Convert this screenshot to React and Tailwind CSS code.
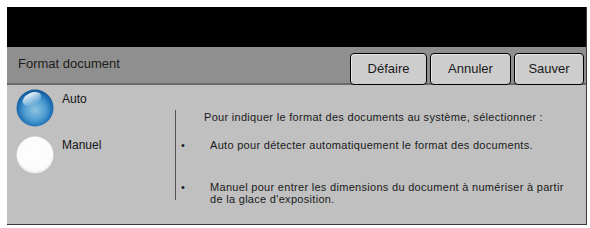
import React from "react";

function BlueBall() {
  return (
    <svg width="38" height="38" viewBox="0 0 38 38">
      <defs>
        <radialGradient id="bb" cx="50%" cy="55%" r="55%">
          <stop offset="0%" stopColor="#8fc3de" />
          <stop offset="55%" stopColor="#4a9bd0" />
          <stop offset="85%" stopColor="#1c6db4" />
          <stop offset="100%" stopColor="#14508a" />
        </radialGradient>
        <linearGradient id="bh" x1="0" y1="0" x2="0" y2="1">
          <stop offset="0%" stopColor="#ffffff" stopOpacity="0.95" />
          <stop offset="100%" stopColor="#ffffff" stopOpacity="0" />
        </linearGradient>
      </defs>
      <circle cx="19" cy="19" r="18.5" fill="url(#bb)" />
      <ellipse cx="16" cy="10" rx="10" ry="6" fill="url(#bh)" transform="rotate(-25 16 10)" />
    </svg>
  );
}

function WhiteBall() {
  return (
    <svg width="38" height="38" viewBox="0 0 38 38">
      <defs>
        <radialGradient id="wb" cx="50%" cy="45%" r="55%">
          <stop offset="0%" stopColor="#ffffff" />
          <stop offset="85%" stopColor="#fbfbfd" />
          <stop offset="100%" stopColor="#e4e6ea" />
        </radialGradient>
      </defs>
      <circle cx="19" cy="19" r="18.5" fill="url(#wb)" />
    </svg>
  );
}

function Btn({ children, w }) {
  return (
    <div
      className={`${w} h-[32px] rounded-[4px] border-[1.5px] border-black bg-[#cdcdcd] flex items-center justify-center text-[13px] text-[#1a1a1a] shadow-[inset_1px_1px_0_#e8e8e8]`}
    >
      {children}
    </div>
  );
}

export default function App() {
  return (
    <div className="w-[590px] h-[228px] bg-white pt-[7px] pl-[7px] font-['Liberation_Sans',Arial,sans-serif]">
      <div className="w-[580px] h-[218px] flex flex-col border-r border-b border-[#3a3a3a]">
        <div className="h-[40px] bg-black" />
        <div className="h-[38px] bg-[#8f8f8f] border-b-2 border-[#6a6a6a] flex items-end justify-between pl-[11px] pr-[2px]">
          <div className="self-center text-[13px] text-[#1c1c1c] pb-[2px]">Format document</div>
          <div className="flex gap-[3px] -mb-[2px]">
            <Btn w="w-[77px]">Défaire</Btn>
            <Btn w="w-[81px]">Annuler</Btn>
            <Btn w="w-[70px]">Sauver</Btn>
          </div>
        </div>
        <div className="flex-1 bg-[#c0c0c0] flex">
          <div className="w-[168px] pl-[9px] pt-[4px] flex flex-col gap-[9px]">
            <div className="flex items-start gap-[8px]">
              <BlueBall />
              <span className="text-[12px] text-[#151515] leading-none mt-[4px]">Auto</span>
            </div>
            <div className="flex items-start gap-[8px]">
              <WhiteBall />
              <span className="text-[12px] text-[#151515] leading-none mt-[3px]">Manuel</span>
            </div>
          </div>
          <div className="mt-[25px] h-[90px] border-l border-[#505050] text-[11px] text-[#1a1a1a] leading-[12px] tracking-[0.3px]">
            <p className="ml-[28px] mt-[1px]">Pour indiquer le format des documents au système, sélectionner :</p>
            <div className="flex items-start mt-[16px]">
              <span className="ml-[5px] w-[29px]">•</span>
              <p>Auto pour détecter automatiquement le format des documents.</p>
            </div>
            <div className="flex items-start mt-[30px]">
              <span className="ml-[5px] w-[29px]">•</span>
              <p className="w-[362px]">Manuel pour entrer les dimensions du document à numériser à partir de la glace d'exposition.</p>
            </div>
          </div>
        </div>
      </div>
    </div>
  );
}
